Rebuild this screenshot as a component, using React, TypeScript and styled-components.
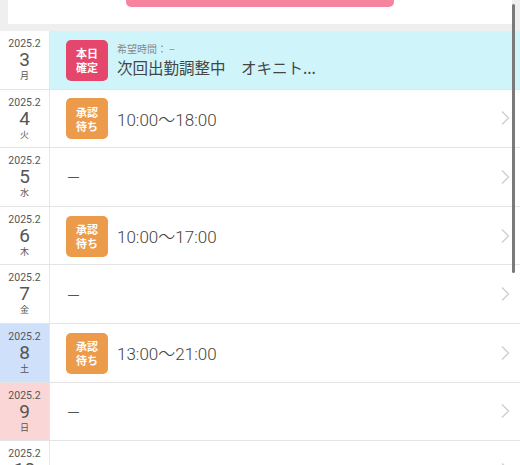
import React from "react";
import styled, { createGlobalStyle } from "styled-components";

const Global = createGlobalStyle`
  html, body { margin: 0; padding: 0; background: #efefef; }
  body { font-family: "Noto Sans CJK JP", "Noto Sans", sans-serif; width: 520px; height: 465px; overflow: hidden; }
`;

const Page = styled.div`
  position: relative;
  width: 520px;
  height: 465px;
  overflow: hidden;
  background: #efefef;
  display: flex;
  flex-direction: column;
`;

const TopCard = styled.div`
  margin: 0 8px;
  height: 24px;
  flex-shrink: 0;
  background: #fff;
  display: flex;
  justify-content: center;
`;

const PinkButton = styled.div`
  width: 268px;
  height: 7px;
  background: #f7849f;
  border-radius: 0 0 5px 5px;
`;

const Gap = styled.div`
  height: 7px;
  flex-shrink: 0;
`;

const List = styled.div`
  display: flex;
  flex-direction: column;
  background: #fff;
  flex: 1;
  min-height: 0;
  overflow: hidden;
`;

type Tone = "today" | "normal";
type Day = "weekday" | "sat" | "sun";

const Row = styled.div<{ $tone: Tone }>`
  height: 58.6px;
  box-sizing: border-box;
  display: flex;
  border-bottom: 1px solid #e4e4e4;
  background: ${(p) => (p.$tone === "today" ? "#cff5fb" : "#fff")};
  flex-shrink: 0;
`;

const DateCell = styled.div<{ $day: Day }>`
  width: 50px;
  flex-shrink: 0;
  box-sizing: border-box;
  border-right: 1px solid #e6e6e6;
  background: ${(p) => (p.$day === "sat" ? "#cfe0fb" : p.$day === "sun" ? "#fbd6d7" : "#fff")};
  display: flex;
  flex-direction: column;
  align-items: center;
  justify-content: flex-start;
  padding-top: 7px;
  color: #555;
`;

const Year = styled.div`
  font-family: "Roboto", "Noto Sans", sans-serif;
  font-size: 10.5px;
  line-height: 12px;
  color: #555;
`;

const DayNum = styled.div`
  font-family: "Roboto", "Noto Sans", sans-serif;
  font-size: 19px;
  line-height: 20px;
  color: #555;
`;

const WeekDay = styled.div`
  font-size: 9px;
  line-height: 12px;
  color: #555;
`;

const Body = styled.div`
  flex: 1;
  display: flex;
  align-items: center;
  padding-left: 16px;
  padding-right: 10px;
  min-width: 0;
`;

const Badge = styled.div<{ $kind: "confirmed" | "pending" }>`
  width: 42px;
  height: 41px;
  border-radius: 5px;
  background: ${(p) => (p.$kind === "confirmed" ? "#e4476b" : "#ec9b4b")};
  color: #fff;
  font-size: 11px;
  font-weight: 700;
  line-height: 14px;
  display: flex;
  flex-direction: column;
  align-items: center;
  justify-content: center;
  flex-shrink: 0;
  margin-right: 9px;
  margin-top: 1px;
`;

const TextCol = styled.div`
  display: flex;
  flex-direction: column;
  flex: 1;
  min-width: 0;
`;

const Hint = styled.div`
  font-size: 10px;
  line-height: 14px;
  color: #888;
`;

const MainText = styled.div`
  font-size: 15.5px;
  line-height: 22px;
  color: #444;
  white-space: pre;
`;

const TimeText = styled.div`
  font-family: "Roboto", "Noto Sans CJK JP", sans-serif;
  font-size: 17px;
  font-weight: 300;
  color: #444;
  flex: 1;
`;

const Dash = styled.div`
  flex: 1;
  font-size: 15px;
  color: #555;
`;

const Chevron = styled.svg`
  width: 10px;
  height: 16px;
  flex-shrink: 0;
`;

const ScrollThumb = styled.div`
  position: absolute;
  right: 5px;
  top: 4px;
  width: 3px;
  height: 269px;
  border-radius: 2px;
  background: #7a7a7a;
`;

type Item = {
  d: number;
  w: string;
  day: Day;
  tone: Tone;
  kind?: "confirmed" | "pending";
  time?: string;
};

const items: Item[] = [
  { d: 3, w: "月", day: "weekday", tone: "today", kind: "confirmed" },
  { d: 4, w: "火", day: "weekday", tone: "normal", kind: "pending", time: "10:00〜18:00" },
  { d: 5, w: "水", day: "weekday", tone: "normal" },
  { d: 6, w: "木", day: "weekday", tone: "normal", kind: "pending", time: "10:00〜17:00" },
  { d: 7, w: "金", day: "weekday", tone: "normal" },
  { d: 8, w: "土", day: "sat", tone: "normal", kind: "pending", time: "13:00〜21:00" },
  { d: 9, w: "日", day: "sun", tone: "normal" },
  { d: 10, w: "月", day: "weekday", tone: "normal" },
];

const Arrow = () => (
  <Chevron viewBox="0 0 10 16">
    <path d="M2 1.5 L8.5 8 L2 14.5" fill="none" stroke="#cfcfcf" strokeWidth="1.4" />
  </Chevron>
);

export default function App() {
  return (
    <Page>
      <Global />
      <TopCard>
        <PinkButton />
      </TopCard>
      <Gap />
      <List>
        {items.map((it) => (
          <Row key={it.d} $tone={it.tone}>
            <DateCell $day={it.day}>
              <Year>2025.2</Year>
              <DayNum>{it.d}</DayNum>
              <WeekDay>{it.w}</WeekDay>
            </DateCell>
            <Body>
              {it.kind === "confirmed" ? (
                <>
                  <Badge $kind="confirmed">
                    <span>本日</span>
                    <span>確定</span>
                  </Badge>
                  <TextCol>
                    <Hint>希望時間： −</Hint>
                    <MainText>次回出勤調整中　オキニト...</MainText>
                  </TextCol>
                </>
              ) : it.kind === "pending" ? (
                <>
                  <Badge $kind="pending">
                    <span>承認</span>
                    <span>待ち</span>
                  </Badge>
                  <TimeText>{it.time}</TimeText>
                  <Arrow />
                </>
              ) : (
                <>
                  <Dash>－</Dash>
                  <Arrow />
                </>
              )}
            </Body>
          </Row>
        ))}
      </List>
      <ScrollThumb />
    </Page>
  );
}
